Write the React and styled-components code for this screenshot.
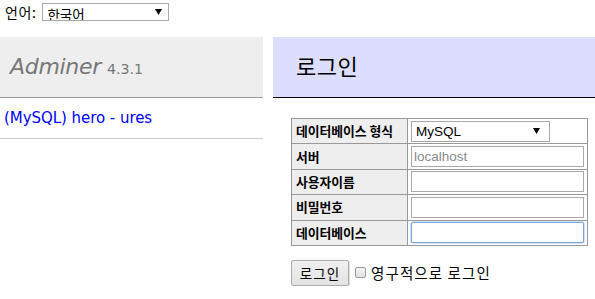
import React from "react";
import styled, { createGlobalStyle } from "styled-components";

const Global = createGlobalStyle`
  html, body { margin: 0; padding: 0; background: #fff; }
  body {
    color: #000;
    font-family: "DejaVu Sans", "Noto Sans CJK KR", sans-serif;
    font-size: 13.86px;
    line-height: 1.25;
  }
`;

const KR = `"Noto Sans CJK KR", "Noto Sans", sans-serif`;
const ARIAL = `"Liberation Sans", "Noto Sans CJK KR", sans-serif`;

const Page = styled.div`
  width: 595px;
`;

const LangBar = styled.form`
  display: flex;
  align-items: flex-start;
  gap: 6px;
  height: 37px;
  box-sizing: border-box;
  padding: 3px 0 0 5px;
  font-family: ${KR};
  font-size: 14px;
`;

const LangLabel = styled.label`
  line-height: 18px;
  letter-spacing: 0.6px;
`;

const SelectWrap = styled.div`
  position: relative;
  width: ${(p) => p.$w}px;
  height: ${(p) => p.$h}px;
  flex: none;
`;

const Select = styled.select`
  appearance: none;
  -webkit-appearance: none;
  width: 100%;
  height: 100%;
  margin: 0;
  box-sizing: border-box;
  border: 1px solid #a9a9a9;
  border-radius: 0;
  background: #fff;
  padding: 0 0 0 ${(p) => p.$pl || 3}px;
  font-family: ${(p) => (p.$kr ? KR : ARIAL)};
  font-size: 13.5px;
  color: #000;
  outline: none;
`;

const Arrow = styled.svg`
  position: absolute;
  right: ${(p) => p.$r}px;
  top: 50%;
  margin-top: -3px;
  width: 7px;
  height: 6px;
  pointer-events: none;
`;

const Main = styled.div`
  display: flex;
  align-items: flex-start;
  gap: 10px;
`;

const Menu = styled.div`
  width: 263px;
  flex: none;
`;

const H1 = styled.h1`
  margin: 0;
  height: 61px;
  box-sizing: border-box;
  padding: 17px 10px 0;
  background: #eee;
  border-bottom: 1px solid #999;
  color: #777;
  font-weight: normal;
  font-size: 21px;
  line-height: 26px;
  white-space: nowrap;
`;

const Brand = styled.a`
  color: #777;
  text-decoration: none;
  font-style: italic;
  font-family: "DejaVu Sans", sans-serif;
  font-size: 22px;
  letter-spacing: -0.3px;
`;

const Version = styled.span`
  color: #777;
  font-size: 14.2px;
  margin-left: 6px;
  font-family: "DejaVu Sans", sans-serif;
`;

const Logins = styled.p`
  margin: 0;
  height: 41px;
  box-sizing: border-box;
  padding: 11px 4px 0;
  border-bottom: 1px solid #ccc;
`;

const Link = styled.a`
  color: blue;
  text-decoration: none;
  font-size: 15px;
  font-family: "DejaVu Sans", sans-serif;
  letter-spacing: -0.05px;
`;

const Content = styled.div`
  flex: 1;
  min-width: 0;
`;

const H2 = styled.h2`
  margin: 0 0 20px;
  height: 61px;
  box-sizing: border-box;
  padding: 15px 23px 0;
  background: #ddf;
  border-bottom: 1px solid #000;
  font-weight: normal;
  font-family: ${KR};
  font-size: 22px;
  line-height: 27px;
  letter-spacing: 0.5px;
  color: #000;
`;

const Form = styled.form`
  margin-left: 18px;
`;

const Table = styled.table`
  border-collapse: separate;
  border-spacing: 0;
  border-top: 1px solid #999;
  border-left: 1px solid #999;
  margin: 0;
`;

const Th = styled.th`
  width: 116px;
  padding: 0 4px;
  height: 25.4px;
  box-sizing: border-box;
  background: #eee;
  text-align: left;
  white-space: nowrap;
  font-family: ${KR};
  font-weight: bold;
  font-size: 12.8px;
  line-height: 16px;
  border-right: 1px solid #999;
  border-bottom: 1px solid #999;
`;

const Td = styled.td`
  padding: 0 2px 0 3px;
  height: 25.4px;
  box-sizing: border-box;
  width: 180px;
  border-right: 1px solid #999;
  border-bottom: 1px solid #999;
  vertical-align: middle;
`;

const Input = styled.input`
  display: block;
  width: 173px;
  height: 21px;
  margin: 0;
  box-sizing: border-box;
  padding: 1px 2px;
  border: 1px solid ${(p) => (p.$focus ? "#7aa7dd" : "#a9a9a9")};
  border-radius: ${(p) => (p.$focus ? "2px" : "0")};
  box-shadow: ${(p) => (p.$focus ? "0 0 0 0.5px #a7c6ec" : "none")};
  font-family: ${ARIAL};
  font-size: 13.5px;
  color: #000;
  outline: none;
  &::placeholder { color: #8a8a8a; }
`;

const Submit = styled.p`
  display: flex;
  align-items: center;
  margin: 14px 0 0;
`;

const Button = styled.button`
  width: 58px;
  height: 26px;
  box-sizing: border-box;
  border: 1px solid #acacac;
  border-radius: 2px;
  background: linear-gradient(#f0f0f0, #e3e3e3);
  box-shadow: 1px 1px 1px rgba(0,0,0,0.15);
  font-family: ${KR};
  font-size: 13.5px;
  padding: 0;
  color: #000;
  letter-spacing: 1px;
`;

const CheckLabel = styled.label`
  display: flex;
  align-items: center;
  margin-left: 6px;
  font-family: ${KR};
  font-size: 14.5px;
  letter-spacing: 1.1px;
`;

const Check = styled.span`
  display: inline-block;
  width: 11px;
  height: 11px;
  box-sizing: border-box;
  border: 1px solid #9a9a9a;
  border-radius: 2px;
  background: linear-gradient(#f4f4f4, #e2e2e2);
  margin: 0 5px 0 0;
`;

const rows = [
  { label: "사용자이름" },
  { label: "비밀번호", type: "password" },
  { label: "데이터베이스", focus: true },
];

function Caret({ r }) {
  return (
    <Arrow $r={r} viewBox="0 0 7 6">
      <path d="M0 0 H7 L3.5 6 Z" fill="#000" />
    </Arrow>
  );
}

export default function App() {
  return (
    <Page>
      <Global />
      <LangBar>
        <LangLabel>언어:</LangLabel>
        <SelectWrap $w={127} $h={18}>
          <Select $kr $pl={4} defaultValue="ko">
            <option value="ko">한국어</option>
          </Select>
          <Caret r={7} />
        </SelectWrap>
      </LangBar>
      <Main>
        <Menu>
          <H1>
            <Brand href="#">Adminer</Brand>
            <Version>4.3.1</Version>
          </H1>
          <Logins>
            <Link href="#">(MySQL) hero - ures</Link>
          </Logins>
        </Menu>
        <Content>
          <H2>로그인</H2>
          <Form>
            <Table>
              <tbody>
                <tr>
                  <Th>데이터베이스 형식</Th>
                  <Td>
                    <SelectWrap $w={139} $h={21}>
                      <Select $pl={4} defaultValue="mysql">
                        <option value="mysql">MySQL</option>
                      </Select>
                      <Caret r={10} />
                    </SelectWrap>
                  </Td>
                </tr>
                <tr>
                  <Th>서버</Th>
                  <Td>
                    <Input placeholder="localhost" />
                  </Td>
                </tr>
                {rows.map((r) => (
                  <tr key={r.label}>
                    <Th>{r.label}</Th>
                    <Td>
                      <Input type={r.type || "text"} $focus={r.focus} />
                    </Td>
                  </tr>
                ))}
              </tbody>
            </Table>
            <Submit>
              <Button type="button">로그인</Button>
              <CheckLabel>
                <Check />
                영구적으로 로그인
              </CheckLabel>
            </Submit>
          </Form>
        </Content>
      </Main>
    </Page>
  );
}
